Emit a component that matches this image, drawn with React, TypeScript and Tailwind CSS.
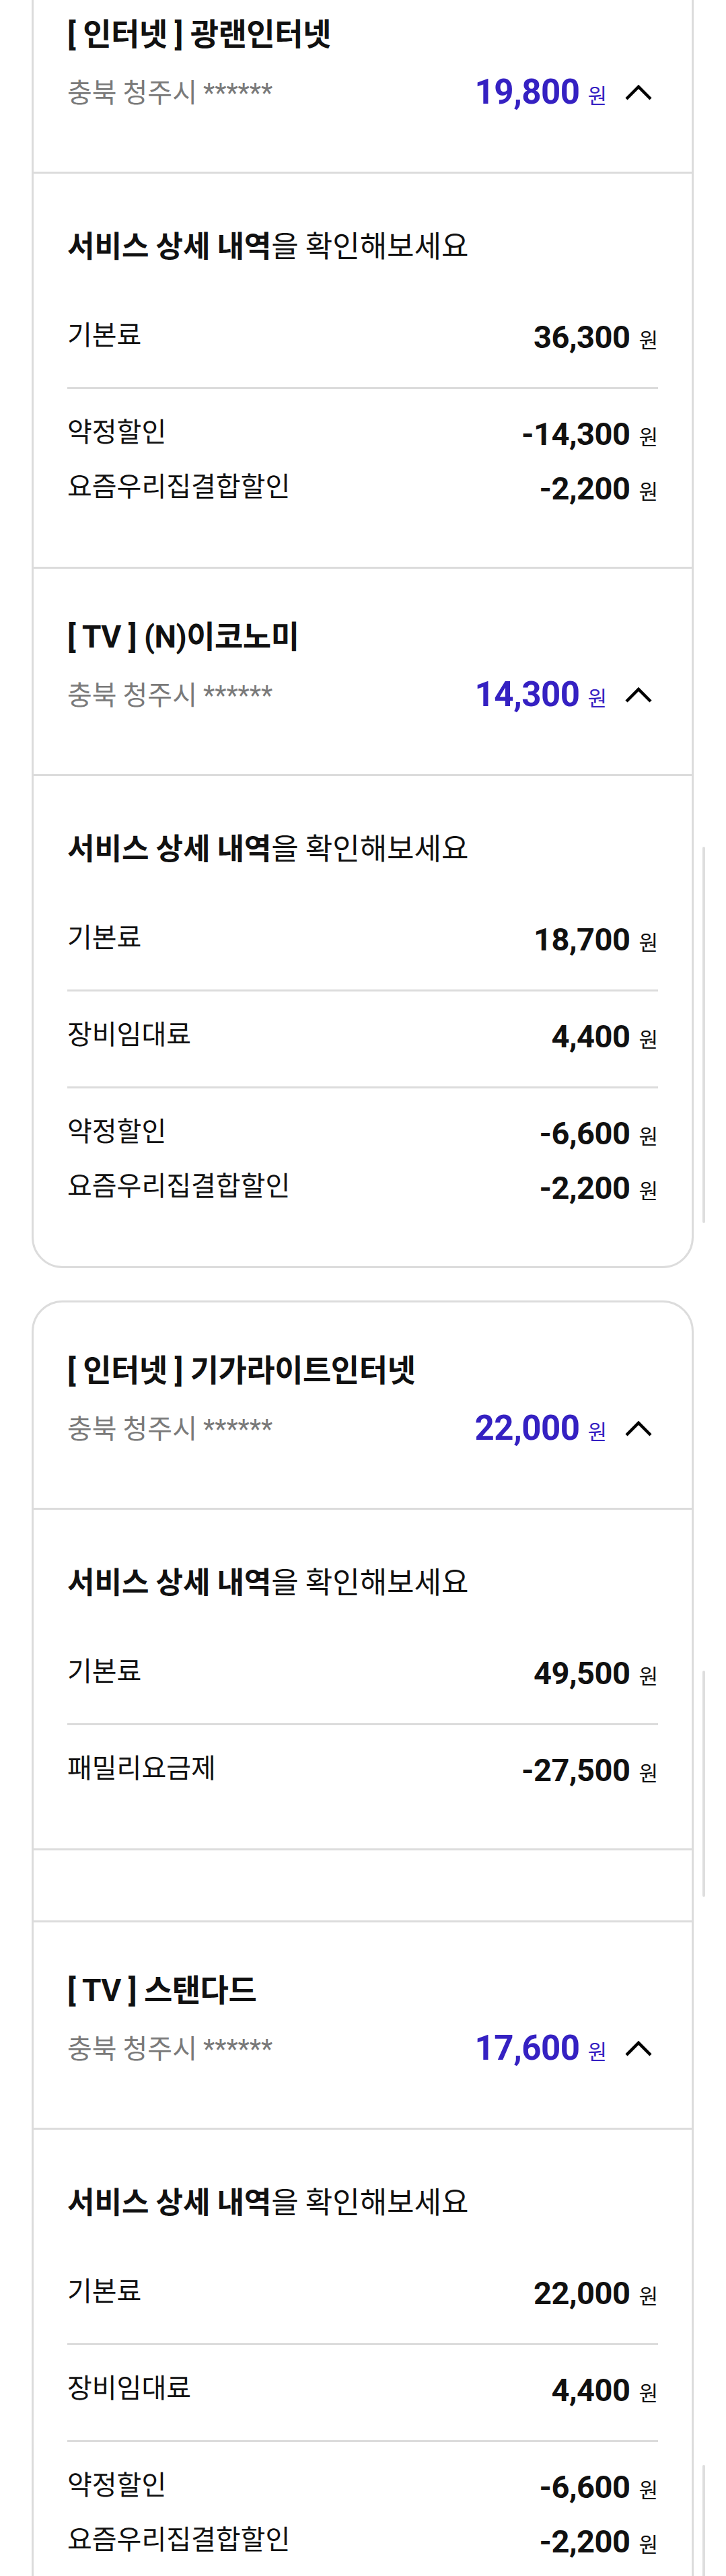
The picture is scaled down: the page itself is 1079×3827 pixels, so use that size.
import { Fragment } from 'react';

type Row = [string, string];
type Service = {
  title: string;
  price: string;
  groups: Row[][];
  spacerAfter?: boolean;
};

const cards: { cutTop?: boolean; services: Service[] }[] = [
  {
    cutTop: true,
    services: [
      {
        title: '[ 인터넷 ] 광랜인터넷',
        price: '19,800',
        groups: [[['기본료', '36,300']], [['약정할인', '-14,300'], ['요즘우리집결합할인', '-2,200']]],
      },
      {
        title: '[ TV ] (N)이코노미',
        price: '14,300',
        groups: [
          [['기본료', '18,700']],
          [['장비임대료', '4,400']],
          [['약정할인', '-6,600'], ['요즘우리집결합할인', '-2,200']],
        ],
      },
    ],
  },
  {
    services: [
      {
        title: '[ 인터넷 ] 기가라이트인터넷',
        price: '22,000',
        groups: [[['기본료', '49,500']], [['패밀리요금제', '-27,500']]],
        spacerAfter: true,
      },
      {
        title: '[ TV ] 스탠다드',
        price: '17,600',
        groups: [
          [['기본료', '22,000']],
          [['장비임대료', '4,400']],
          [['약정할인', '-6,600'], ['요즘우리집결합할인', '-2,200']],
        ],
      },
    ],
  },
];

const kr = "font-['Noto_Sans_CJK_KR','Noto_Sans',sans-serif]";
const num = "font-['Roboto','Noto_Sans_CJK_KR',sans-serif]";

function ChevronUp() {
  return (
    <svg width="42" height="26" viewBox="0 0 42 26" fill="none" aria-hidden="true" className="flex-none">
      <path d="M3 23 L21 5 L39 23" stroke="#000" strokeWidth="4.5" />
    </svg>
  );
}

function ServiceHeader({ service }: { service: Service }) {
  return (
    <div className="border-b-[3px] border-[#dcdcdc] pb-[88px] pl-[50px] pr-[58px] pt-[73px]">
      <h2 className={`${num} text-[46px] font-bold leading-[56px] tracking-[-0.5px] text-[#111]`}>{service.title}</h2>
      <div className="mt-[28px] flex h-[60px] items-center justify-between">
        <span className={`${kr} text-[40px] leading-[48px] text-[#7a7a7a]`}>
          충북 청주시 <span className={num}>******</span>
        </span>
        <div className="flex items-center gap-[26px]">
          <div className="flex items-baseline gap-[12px] text-[#3521c2]">
            <span className={`${num} text-[51px] font-bold leading-[60px] tracking-[-0.5px]`}>{service.price}</span>
            <span className={`${kr} text-[31px] leading-none`}>원</span>
          </div>
          <ChevronUp />
        </div>
      </div>
    </div>
  );
}

function ChargeRow({ row }: { row: Row }) {
  return (
    <div className="flex items-start justify-between">
      <span className={`${kr} text-[40px] leading-[48px] text-[#111]`}>{row[0]}</span>
      <div className="flex items-baseline gap-[13px] text-[#111]">
        <span className={`${num} text-[47px] font-bold leading-[60px] tracking-[-0.5px]`}>{row[1]}</span>
        <span className={`${kr} text-[31px] leading-none`}>원</span>
      </div>
    </div>
  );
}

function ServiceDetail({ service, last }: { service: Service; last: boolean }) {
  return (
    <div className={`px-[50px] pb-[42px] pt-[81px] ${last ? '' : 'border-b-[3px] border-[#dcdcdc]'}`}>
      <p className={`${kr} mb-[47px] text-[44px] leading-[48px] text-[#111]`}>
        <span className="font-bold">서비스 상세 내역</span>을 확인해보세요
      </p>
      {service.groups.map((group, i) => (
        <div
          key={i}
          className={`flex flex-col gap-[21px] pb-[44px] pt-[37px] ${
            i < service.groups.length - 1 ? 'border-b-[3px] border-[#dcdcdc]' : ''
          }`}
        >
          {group.map((row) => (
            <ChargeRow key={row[0]} row={row} />
          ))}
        </div>
      ))}
    </div>
  );
}

export default function App() {
  return (
    <div className="relative h-[3827px] overflow-hidden bg-white">
      <div className="flex flex-col gap-[48px] pl-[47px] pr-[48px]">
        {cards.map((card, ci) => (
          <section
            key={ci}
            className={`border-[3px] border-[#dcdcdc] bg-white ${
              card.cutTop ? 'mt-[-53px] rounded-b-[46px]' : 'rounded-t-[46px]'
            }`}
          >
            {card.services.map((service, si) => {
              const last = si === card.services.length - 1;
              return (
                <Fragment key={service.title}>
                  <ServiceHeader service={service} />
                  <ServiceDetail service={service} last={last && !service.spacerAfter} />
                  {service.spacerAfter && <div className="h-[107px] border-b-[3px] border-[#dcdcdc]" />}
                </Fragment>
              );
            })}
          </section>
        ))}
      </div>

      {/* scroll capture leftovers */}
      <div className="absolute right-[31px] top-[1258px] h-[559px] w-[4px] rounded-full bg-[#dedede]" />
      <div className="absolute right-[31px] top-[2482px] h-[336px] w-[4px] rounded-full bg-[#dedede]" />
      <div className="absolute right-[31px] top-[3662px] h-[170px] w-[4px] rounded-full bg-[#dedede]" />
    </div>
  );
}
